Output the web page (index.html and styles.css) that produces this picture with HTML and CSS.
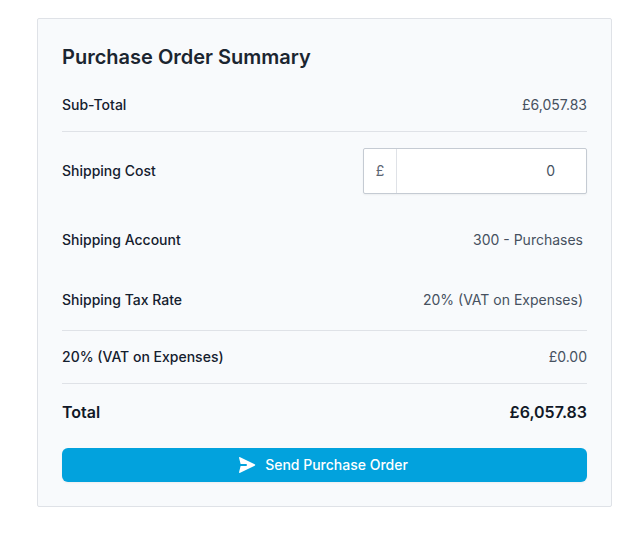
FILE: index.html
```html
<!DOCTYPE html>
<html lang="en">
<head>
<meta charset="utf-8">
<meta name="viewport" content="width=device-width, initial-scale=1">
<title>Purchase Order Summary</title>
<link rel="stylesheet" href="styles.css">
</head>
<body>
<main class="page">
  <form class="summary">
    <h2 class="summary-title">Purchase Order Summary</h2>
    <div class="row row-first">
      <span class="label">Sub-Total</span>
      <span class="value">£6,057.83</span>
    </div>
    <div class="row row-divided">
      <label class="label" for="shipping-cost">Shipping Cost</label>
      <div class="money">
        <span class="money-prefix">£</span>
        <input class="money-input" id="shipping-cost" type="text" inputmode="decimal" value="0">
      </div>
    </div>
    <div class="row row-option">
      <span class="label">Shipping Account</span>
      <span class="value">300 - Purchases</span>
    </div>
    <div class="row row-option">
      <span class="label">Shipping Tax Rate</span>
      <span class="value">20% (VAT on Expenses)</span>
    </div>
    <div class="row row-divided">
      <span class="label">20% (VAT on Expenses)</span>
      <span class="value">£0.00</span>
    </div>
    <div class="row row-divided row-total">
      <span>Total</span>
      <span>£6,057.83</span>
    </div>
    <button class="send" type="button">
      <svg class="send-icon" viewBox="0 0 20 20" fill="currentColor" aria-hidden="true"><path d="M3.2 2.2L17.7 9.3Q18.8 10 17.7 10.7L3.2 17.8Q1.8 18.300 2.100 16.900L3.600 11H9Q10 11 10 10Q10 9 9 9H3.600L2.100 3.100Q1.800 1.700 3.200 2.200Z"/></svg>
      Send Purchase Order
    </button>
  </form>
</main>
</body>
</html>
```
FILE: styles.css
```css
* {
  box-sizing: border-box;
}

body {
  margin: 0;
  background: #fff;
  color: #14202e;
  font-family: Inter, "Liberation Sans", sans-serif;
  font-size: 14px;
  line-height: 20px;
}

.page {
  padding: 18px 30px 30px 37px;
}

.summary {
  padding: 24px;
  border: 1px solid #dfe2e7;
  border-radius: 2px;
  background: #f8fafc;
}

.summary-title {
  margin: 0 0 24px;
  font-size: 20px;
  font-weight: 600;
  line-height: 28px;
  color: #1b2530;
}

.row {
  display: flex;
  align-items: center;
  justify-content: space-between;
  gap: 16px;
}

.row-first {
  padding-bottom: 16px;
}

.row-divided {
  padding: 16px 0;
  border-top: 1px solid #dfe2e7;
}

.row-option {
  padding: 20px 4px 20px 0;
}

.row-total {
  padding-bottom: 24px;
  font-size: 16px;
  font-weight: 600;
  line-height: 24px;
  color: #111827;
}

.label {
  font-weight: 500;
}

.value {
  color: #46515f;
}

.money {
  display: flex;
  width: 224px;
  border: 1px solid #c5cbd3;
  border-radius: 2px;
  background: #fff;
  box-shadow: 0 1px 2px rgba(0, 0, 0, 0.05);
}

.money-prefix {
  width: 33px;
  padding: 12px 0;
  border-right: 1px solid #dfe2e7;
  color: #5b6573;
  text-align: center;
}

.money-input {
  flex: 1;
  min-width: 0;
  padding: 12px 31px 12px 12px;
  border: 0;
  background: transparent;
  color: #46515f;
  font: inherit;
  text-align: right;
}

.send {
  display: flex;
  align-items: center;
  justify-content: center;
  gap: 8px;
  width: 100%;
  padding: 7px 16px;
  border: 0;
  border-radius: 6px;
  background: #02a2dd;
  color: #fff;
  font: inherit;
  font-weight: 500;
  box-shadow: 0 1px 2px rgba(0, 0, 0, 0.05);
}

.send-icon {
  width: 20px;
  height: 20px;
  margin-left: -4px;
}
```
